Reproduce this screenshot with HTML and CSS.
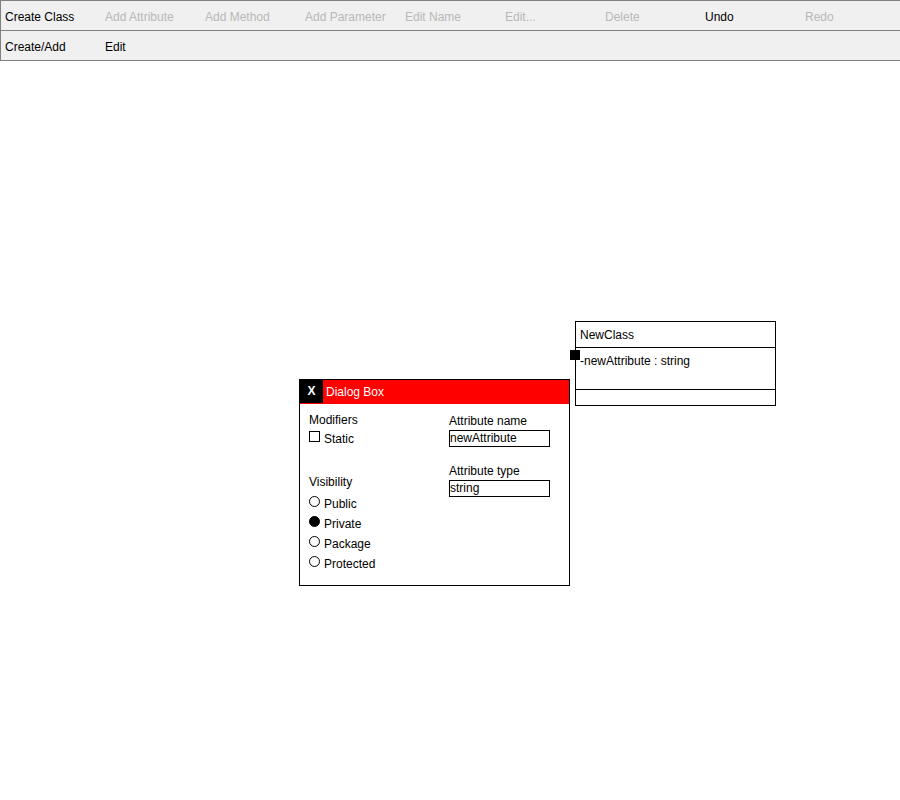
FILE: index.html
```html
<!DOCTYPE html>
<html>
<head>
<meta charset="utf-8">
<title>Class Diagram Editor</title>
<link rel="stylesheet" href="styles.css">
</head>
<body>
<div class="toolbar">
  <div class="tool-row">
    <div class="tool">Create Class</div>
    <div class="tool disabled">Add Attribute</div>
    <div class="tool disabled">Add Method</div>
    <div class="tool disabled">Add Parameter</div>
    <div class="tool disabled">Edit Name</div>
    <div class="tool disabled">Edit...</div>
    <div class="tool disabled">Delete</div>
    <div class="tool">Undo</div>
    <div class="tool disabled">Redo</div>
  </div>
  <div class="tool-row">
    <div class="tool">Create/Add</div>
    <div class="tool">Edit</div>
  </div>
</div>

<div class="canvas">
  <div class="class-box">
    <div class="class-name">NewClass</div>
    <div class="class-attrs">-newAttribute : string</div>
    <div class="class-methods"></div>
  </div>
  <div class="handle"></div>

  <div class="dialog">
    <div class="dialog-title">
      <div class="close-btn">X</div>
      <div class="title-text">Dialog Box</div>
    </div>
    <div class="dialog-body">
      <div class="col-left">
        <div class="label">Modifiers</div>
        <div class="option check-row"><span class="checkbox"></span><span>Static</span></div>
        <div class="label visibility">Visibility</div>
        <div class="option radio-first"><span class="radio"></span><span>Public</span></div>
        <div class="option radio-next"><span class="radio checked"></span><span>Private</span></div>
        <div class="option radio-next"><span class="radio"></span><span>Package</span></div>
        <div class="option radio-next"><span class="radio"></span><span>Protected</span></div>
      </div>
      <div class="col-right">
        <div class="label">Attribute name</div>
        <div class="field">newAttribute</div>
        <div class="label second">Attribute type</div>
        <div class="field">string</div>
      </div>
    </div>
  </div>
</div>
</body>
</html>
```

FILE: styles.css
```css
html, body {
  margin: 0;
  padding: 0;
  background: #ffffff;
  font-family: "Liberation Sans", Arial, sans-serif;
  font-size: 12px;
  color: #000000;
}

.toolbar {
  background: #f0f0f0;
  border-top: 1px solid #808080;
  border-left: 1px solid #808080;
}

.tool-row {
  display: flex;
  height: 29px;
  border-bottom: 1px solid #808080;
}

.tool {
  width: 100px;
  flex: 0 0 100px;
  box-sizing: border-box;
  padding-left: 4px;
  padding-top: 4px;
  line-height: 25px;
  white-space: nowrap;
}

.tool.disabled {
  color: #b8b8b8;
}

.canvas {
  position: relative;
  height: 739px;
}

/* class box on the diagram canvas */
.class-box {
  position: absolute;
  left: 575px;
  top: 260px;
  width: 199px;
  border: 1px solid #000000;
  background: #ffffff;
}

.class-name {
  height: 26px;
  box-sizing: border-box;
  padding-top: 1px;
  line-height: 24px;
  padding-left: 4px;
  border-bottom: 1px solid #000000;
}

.class-attrs {
  height: 42px;
  box-sizing: border-box;
  padding-top: 6px;
  padding-left: 4px;
  line-height: 14px;
  border-bottom: 1px solid #000000;
}

.class-methods {
  height: 15px;
}

.handle {
  position: absolute;
  left: 570px;
  top: 289px;
  width: 10px;
  height: 10px;
  background: #000000;
}

/* dialog window */
.dialog {
  position: absolute;
  left: 299px;
  top: 318px;
  width: 269px;
  height: 205px;
  border: 1px solid #000000;
  background: #ffffff;
}

.dialog-title {
  display: flex;
  height: 24px;
  background: #ff0000;
}

.close-btn {
  width: 23px;
  height: 23px;
  background: #000000;
  color: #ffffff;
  font-weight: bold;
  text-align: center;
  line-height: 23px;
}

.title-text {
  color: #ffffff;
  line-height: 24px;
  padding-left: 3px;
}

.dialog-body {
  display: flex;
  padding-left: 9px;
}

.col-left {
  width: 140px;
  padding-top: 9px;
}

.col-right {
  padding-top: 10px;
}

.label {
  line-height: 14px;
  height: 14px;
}

.label.visibility {
  margin-top: 29px;
}

.label.second {
  margin-top: 17px;
}

.option {
  display: flex;
  align-items: flex-start;
  line-height: 14px;
  height: 14px;
}

.check-row {
  margin-top: 5px;
}

.radio-first {
  margin-top: 8px;
}

.radio-next {
  margin-top: 6px;
}

.checkbox {
  width: 9px;
  height: 9px;
  border: 1px solid #000000;
  margin-top: -1px;
  margin-right: 4px;
  flex: 0 0 auto;
}

.radio {
  width: 9px;
  height: 9px;
  border: 1px solid #000000;
  border-radius: 50%;
  margin-top: -1px;
  margin-right: 4px;
  flex: 0 0 auto;
}

.radio.checked {
  background: #000000;
}

.field {
  margin-top: 2px;
  width: 99px;
  height: 15px;
  line-height: 15px;
  border: 1px solid #000000;
  white-space: nowrap;
  overflow: hidden;
}
```
